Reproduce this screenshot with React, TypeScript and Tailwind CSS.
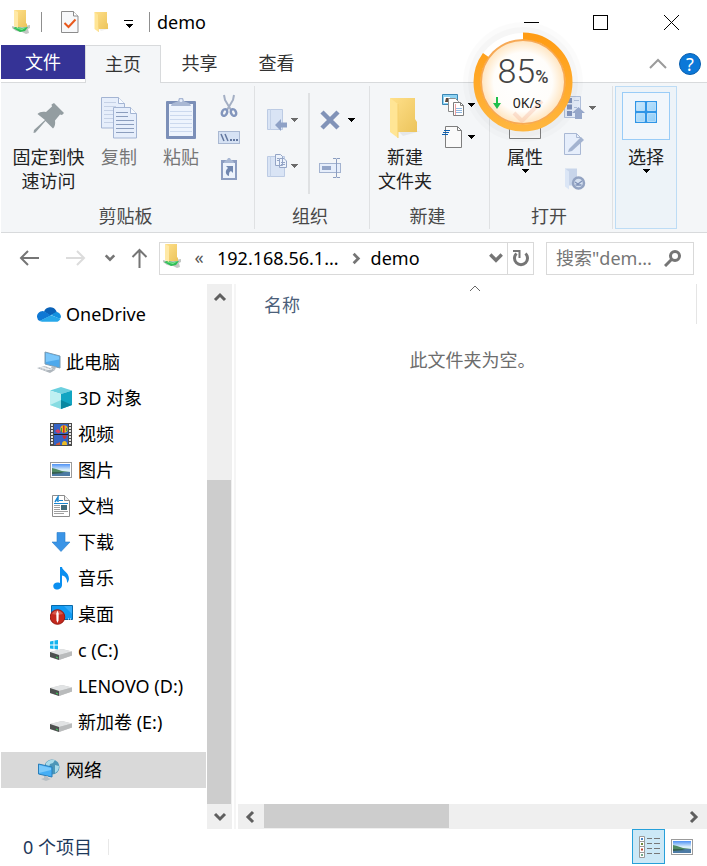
import type { ReactNode } from "react";

type IconProps = { className?: string };

/* ---------- shared shapes ---------- */

function DropArrow({ dim = false }: { dim?: boolean }) {
  return (
    <svg width="8" height="4" viewBox="0 0 8 4" className="shrink-0" shapeRendering="crispEdges">
      <path d="M0 0h8L4 4z" fill={dim ? "#6b6b6b" : "#000"} />
    </svg>
  );
}

function SharedFolder({ className }: IconProps) {
  return (
    <svg width="20" height="24" viewBox="0 0 20 24" className={className}>
      <defs>
        <linearGradient id="sharedBack" x1="0" y1="0" x2="1" y2="1">
          <stop offset="0" stopColor="#ffe08a" />
          <stop offset="1" stopColor="#ecc45c" />
        </linearGradient>
      </defs>
      <path d="M1 16l4 1 8-1 6-1v3l-2 1 1 4-3 1-4-2-6-1-4-3z" fill="#c3c7c4" />
      <path d="M2 18l3-1 6 1 6-1-3 4-5 1z" fill="#2fbf55" />
      <path d="M4 18l7 .5 4-1-4 2.500z" fill="#86e69b" />
      <path d="M3 0h12v13l1 1v3H7z" fill="url(#sharedBack)" />
      <path d="M3 0l4 2v16l-4-2z" fill="#ffe9a6" />
    </svg>
  );
}

function Folder({ big = false }: { big?: boolean }) {
  return (
    <svg width={big ? 32 : 16} height={big ? 42 : 22} viewBox="0 0 32 42">
      <defs>
        <linearGradient id="folderBack" x1="0" y1="0" x2="1" y2="1">
          <stop offset="0" stopColor="#ffe08a" />
          <stop offset="1" stopColor="#ecc45c" />
        </linearGradient>
      </defs>
      <path d="M10 35l22-1-18 5z" fill="#000" opacity=".06" />
      <path d="M1 1h25v21l2 3v10H9z" fill="url(#folderBack)" />
      <path d="M1 1l8 6v34l-8-6z" fill="#ffe595" />
      <path d="M9 7v34" stroke="#f5cf6c" fill="none" />
    </svg>
  );
}

function CheckDoc() {
  return (
    <svg width="18" height="22" viewBox="0 0 18 22">
      <path d="M1 .5h11.500l4.500 4.500v16.500H.5V.5z" fill="#f7f8fa" stroke="#8c8c8c" />
      <path d="M12.500.5v4.500H17" fill="#fff" stroke="#8c8c8c" />
      <path d="M3.500 12l4 4 7-7.500" fill="none" stroke="#e8581c" strokeWidth="2" />
    </svg>
  );
}

function PhotoIcon() {
  return (
    <svg width="22" height="16" viewBox="0 0 22 16">
      <defs>
        <linearGradient id="sky" x1="0" y1="0" x2="0" y2="1">
          <stop offset="0" stopColor="#4f92f5" />
          <stop offset=".5" stopColor="#dff1fa" />
          <stop offset="1" stopColor="#a9cfe6" />
        </linearGradient>
      </defs>
      <rect x=".5" y=".5" width="21" height="15" fill="#fff" stroke="#9b9b9b" />
      <rect x="2" y="2" width="18" height="12" fill="url(#sky)" />
      <path d="M2 6l4 1 6 2 8 1v1H2z" fill="#4f8a63" />
      <path d="M2 10h18v4H2z" fill="#4d7ba5" />
      <path d="M2 10l9 0 3 1-12 1z" fill="#35604f" />
    </svg>
  );
}

function Chevron({ dir, size = 14, color = "#5f5f5f", w = 3 }: { dir: "up" | "down" | "left" | "right"; size?: number; color?: string; w?: number }) {
  const d = {
    up: "M2 10l5-5 5 5",
    down: "M2 4l5 5 5-5",
    left: "M9 2L4 7l5 5",
    right: "M5 2l5 5-5 5",
  }[dir];
  return (
    <svg width={size} height={size} viewBox="0 0 14 14" fill="none" stroke={color} strokeWidth={w}>
      <path d={d} />
    </svg>
  );
}

/* ---------- ribbon icons ---------- */

function PinIcon() {
  return (
    <svg width="32" height="32" viewBox="0 0 32 32" fill="#939da1">
      <path d="M21 1l10 10-2 2-2-.5-5 6c.5 3.500 0 6-2 8L12.500 19 2.500 30.500.5 31l.5-3L12 18 4.500 12c2-2 5-2.800 8.500-2l6-5.500-.5-2z" />
    </svg>
  );
}

function Sheet({ x, y, dark = false }: { x: number; y: number; dark?: boolean }) {
  return (
    <g transform={`translate(${x} ${y})`}>
      <path d="M.5.5h17l6 6v24.500H.5z" fill="#e6eefb" stroke="#a3b4d3" />
      <path d="M17.500.5v6h6" fill="#f8fbff" stroke="#a3b4d3" />
      <path
        d="M3 5.500h12M3 9.500h12M3 13.500h18M3 17.500h18M3 21.500h18M3 25.500h18"
        stroke={dark ? "#8b9dbd" : "#c5d1e6"}
      />
    </g>
  );
}

function CopyIcon() {
  return (
    <svg width="36" height="42" viewBox="0 0 36 42">
      <Sheet x={0} y={0} />
      <Sheet x={12} y={10} dark />
    </svg>
  );
}

function PasteIcon() {
  return (
    <svg width="30" height="42" viewBox="0 0 30 42">
      <rect x="0" y="4" width="30" height="38" rx="1" fill="#7b8fb8" />
      <rect x="3" y="7" width="24" height="32" fill="#eef4fd" />
      <path d="M4 14.500h22M4 18.500h22M4 22.500h22M4 26.500h22M4 30.500h22M4 34.500h22" stroke="#ccd9ee" />
      <path d="M5 9c1-4 4-3 7-5l1-3h4l1 3c3 2 6 1 7 5z" fill="#a9b8d4" />
      <circle cx="15" cy="3.500" r="1.500" fill="#e6eefb" />
    </svg>
  );
}

function CutIcon() {
  return (
    <svg width="18" height="24" viewBox="0 0 18 24" fill="none">
      <path d="M4 1l1 5 6 10M14 1l-1 5-6 10" stroke="#a4afc4" strokeWidth="2" />
      <ellipse cx="4.500" cy="18.500" rx="2.500" ry="3.500" stroke="#8396bd" strokeWidth="2.500" transform="rotate(25 4.500 18.500)" />
      <ellipse cx="13.500" cy="18.500" rx="2.500" ry="3.500" stroke="#8396bd" strokeWidth="2.500" transform="rotate(-25 13.500 18.500)" />
    </svg>
  );
}

function CopyPathIcon() {
  return (
    <svg width="22" height="13" viewBox="0 0 22 13">
      <rect x=".5" y=".5" width="21" height="12" fill="#d6e2f4" stroke="#a9b8d2" />
      <path d="M3 3l3 7M7 3l3 7" stroke="#62779f" strokeWidth="1.500" />
      <path d="M12 8h2v2h-2zM15 8h2v2h-2zM18 8h2v2h-2z" fill="#62779f" />
    </svg>
  );
}

function PasteShortcutIcon() {
  return (
    <svg width="16" height="23" viewBox="0 0 16 23">
      <rect y="3" width="16" height="20" fill="#8c9dc1" />
      <rect x="2" y="6" width="12" height="15" fill="#edf3fc" />
      <path d="M3 6c0-3 3-2 4-5h2c1 3 4 2 4 5z" fill="#a9b8d4" />
      <path d="M5 9h7v7l-2-2c-2 1-2 2-2 5-4-1-4-6-1-8z" fill="#7187b0" />
    </svg>
  );
}

function MoveToIcon() {
  return (
    <svg width="20" height="24" viewBox="0 0 20 24">
      <path d="M.5 1.500h15v20H.5z" fill="#d9e4f5" stroke="#bccbe4" />
      <path d="M3.500 1.500v20" stroke="#c4d2e8" />
      <path d="M8 17l6-6v3.500h6v5h-6V23z" fill="#8ea1c6" />
    </svg>
  );
}

function CopyToIcon() {
  return (
    <svg width="20" height="24" viewBox="0 0 20 24">
      <path d="M.5 2.500h17v20H.5z" fill="#d9e4f5" stroke="#bccbe4" />
      <path d="M3.500 2.500v20" stroke="#c4d2e8" />
      <path d="M8.500.5h5l2 2v9h-7zM12.500 4.500h4.500l2.500 2.500v6.500h-7z" fill="#edf3fc" stroke="#94a5c6" />
      <path d="M14 8.500h4M14 10.500h4M10 4.500h2M10 6.500h2" stroke="#94a5c6" />
    </svg>
  );
}

function DeleteIcon() {
  return (
    <svg width="22" height="20" viewBox="0 0 22 20">
      <path d="M3 2l16 16M19 2L3 18" stroke="#8193b8" strokeWidth="4.500" />
    </svg>
  );
}

function RenameIcon() {
  return (
    <svg width="22" height="20" viewBox="0 0 22 20" fill="none">
      <rect x=".5" y="5.500" width="21" height="9" fill="#e6eefb" stroke="#a3b3d0" />
      <rect x="3" y="8" width="9" height="4" fill="#93a5c8" />
      <path d="M14 .5h3l.500 1 .5-1h3M14 19.500h3l.500-1 .5 1h3M17.500 1v18" stroke="#8b9dc0" />
    </svg>
  );
}

function NewItemIcon() {
  return (
    <svg width="22" height="22" viewBox="0 0 22 22">
      <path d="M.5.5h15v10H.5z" fill="#8ed3f3" stroke="#3b86b4" />
      <path d="M2 3h6v6H2z" fill="#fff" />
      <path d="M4 4h3v4H3z" fill="#5c493c" />
      <path d="M6.500 4.500h7l3 3v10h-10z" fill="#fff" stroke="#8a8a8a" />
      <path d="M11.500 8.500h7l3 3v10h-10z" fill="#fff" stroke="#7e7e7e" />
      <path d="M18.500 8.500v3h3" fill="none" stroke="#7e7e7e" />
      <path d="M14 14.500h6M14 16.500h6M14 18.500h6" stroke="#8fb7e0" />
      <path d="M13.500 10v11" stroke="#f0a0a0" />
    </svg>
  );
}

function EasyAccessIcon() {
  return (
    <svg width="22" height="22" viewBox="0 0 22 22">
      <path d="M3.500.5h12l4 4v17h-16z" fill="#fafafa" stroke="#7e7e7e" />
      <path d="M15.500.5v4h4" fill="none" stroke="#7e7e7e" />
      <path d="M2 4.500h6M1 6.500h6M0 8.500h6" stroke="#0d5fae" />
    </svg>
  );
}

function PropertiesIcon() {
  return (
    <svg width="32" height="42" viewBox="0 0 32 42" fill="none">
      <path d="M.5.500h31v41H.5z" fill="#f7f7f7" stroke="#808080" />
    </svg>
  );
}

function OpenWithIcon() {
  return (
    <svg width="21" height="24" viewBox="0 0 21 24">
      <path d="M.5.500h16v21H.5z" fill="#e3ebf8" stroke="#b0bfda" />
      <path d="M3 2h5v5H3zM3 8.500h5v5H3zM3 15h5v5H3z" fill="#8294bc" />
      <path d="M10 4.500h5M10 11.500h3" stroke="#b0bfda" />
      <path d="M14.500 11l6.500 6h-3v6h-7v-6H8z" fill="#96a7ca" />
    </svg>
  );
}

function EditIcon() {
  return (
    <svg width="22" height="22" viewBox="0 0 22 22">
      <path d="M.5.500h12l4 4v17H.5z" fill="#e6eefb" stroke="#a9b8d4" />
      <path d="M12.500.5v4h4" fill="none" stroke="#a9b8d4" />
      <path d="M4 19l1-3L17 4l3 3L8 18z" fill="#a3b3d0" />
    </svg>
  );
}

function HistoryIcon() {
  return (
    <svg width="22" height="22" viewBox="0 0 22 22">
      <path d="M1 .5h12v17H5z" fill="#c8d5ea" />
      <path d="M1 .5l4 3v18l-4-3z" fill="#dbe6f6" />
      <circle cx="14.500" cy="15" r="5.500" fill="#d5e0f0" stroke="#93a3c2" strokeWidth="2.500" />
      <path d="M11 14l3 2 4-3M11.500 17h6" fill="none" stroke="#8193b8" strokeWidth="1.300" />
    </svg>
  );
}

function SelectIcon() {
  return (
    <svg width="22" height="22" viewBox="0 0 22 22">
      <defs>
        <linearGradient id="pane" x1="0" y1="0" x2="1" y2="1">
          <stop offset="0" stopColor="#c9e8fd" />
          <stop offset="1" stopColor="#8fcdf8" />
        </linearGradient>
      </defs>
      <path d="M0 0h22v22H0z" fill="#2f95e6" />
      <path d="M1.500 1.500h8v8h-8zM12.500 1.500h8v8h-8zM1.500 12.500h8v8h-8zM12.500 12.500h8v8h-8z" fill="url(#pane)" stroke="#eaf6ff" strokeWidth=".6" />
    </svg>
  );
}

/* ---------- navigation tree icons ---------- */

function OneDriveIcon() {
  return (
    <svg width="24" height="16" viewBox="0 0 24 16">
      <path d="M7 5.500A6.800 6.800 0 0119 4.500l1 2-7 3z" fill="#0a62b8" />
      <path d="M0 11a5.500 5.500 0 017.500-5.500L14 9.500 3 15A4.500 4.500 0 010 11z" fill="#0f78d4" />
      <path d="M14 9l5-3a5 5 0 015 5c-.5 1-1 1.500-2 1.500z" fill="#1490df" />
      <path d="M2.500 15L14 9.200l9.500 3.500c-.8 2-2.500 3.100-4.500 3.100H5z" fill="#28a8ea" />
    </svg>
  );
}

function ComputerIcon() {
  return (
    <svg width="24" height="22" viewBox="0 0 24 22">
      <path d="M8 1l15 4v12L8 13z" fill="#4ea9ec" stroke="#7d9cb2" />
      <path d="M9 2l13 3.500v3L9 11z" fill="#7cc7fa" />
      <path d="M15 15l4 1-1 3-4-2z" fill="#b5bcc2" />
      <path d="M0 17l8-2 10 4-5 3z" fill="#aeb6bd" />
      <path d="M3 17l6-1M5 18l7-1M8 19l7-1" stroke="#f0f2f4" />
    </svg>
  );
}

function CubeIcon() {
  return (
    <svg width="22" height="22" viewBox="0 0 22 22">
      <path d="M11 0l11 3.500L11 7 0 3.500z" fill="#6cd0df" />
      <path d="M0 3.500L11 7v15L0 18z" fill="#bff0f2" />
      <path d="M22 3.500L11 7v15l11-4z" fill="#12a5c2" />
      <path d="M0 18l11-5 0 9z" fill="#86dce2" />
      <path d="M22 18l-11-5v9z" fill="#0987a0" />
    </svg>
  );
}

function VideoIcon() {
  return (
    <svg width="22" height="23" viewBox="0 0 22 23">
      <path d="M0 0h22v23H0z" fill="#4a4a4a" />
      <path d="M4 1h14v10H4zM4 12h14v10H4z" fill="#3563c4" />
      <path d="M1 1h2v2H1zM1 4h2v2H1zM1 7h2v2H1zM1 10h2v2H1zM1 13h2v2H1zM1 16h2v2H1zM1 19h2v2H1zM19 1h2v2h-2zM19 4h2v2h-2zM19 7h2v2h-2zM19 10h2v2h-2zM19 13h2v2h-2zM19 16h2v2h-2zM19 19h2v2h-2z" fill="#e4e4e4" />
      <circle cx="14" cy="6" r="3.800" fill="#e8b120" />
      <path d="M13 2.500h1.500V10H13z" fill="#cc2d2d" />
      <path d="M11 5h1v4h-1zM16 5h1v3h-1z" fill="#3a9a45" />
      <path d="M5 8l3-2 3 3-3 1.500z" fill="#d33f63" />
      <path d="M12 12.500h5l-2 3.500h-1z" fill="#d12c2c" />
      <path d="M12 21c0-4 5-4 5 0v1h-5z" fill="#eabb28" />
      <path d="M6 21l4-2v3H6z" fill="#cf5637" />
      <path d="M4 11.500h14" stroke="#1e1e1e" />
    </svg>
  );
}

function DocumentIcon() {
  return (
    <svg width="18" height="22" viewBox="0 0 18 22">
      <path d="M.5.500h12l5 5v16H.5z" fill="#fff" stroke="#8c8c8c" />
      <path d="M12.500.5v5h5" fill="#f0f0f0" stroke="#8c8c8c" />
      <path d="M3 7l3-5v5M4 5h2" fill="none" stroke="#1a86d0" strokeWidth="1.500" />
      <path d="M7 5.500h4M2 8.500h14" stroke="#1a86d0" />
      <path d="M2 10.500h6M2 12.500h6M2 14.500h6M2 16.500h14M2 18.500h10" stroke="#a0a0a0" />
      <path d="M9 10h6v5H9z" fill="#416c7c" />
    </svg>
  );
}

function DownloadIcon() {
  return (
    <svg width="20" height="20" viewBox="0 0 20 20">
      <path d="M6 .5h8v9.500h5L10 19.500 1 10h5z" fill="#3a94e6" stroke="#2a7ecb" strokeWidth=".6" />
    </svg>
  );
}

function MusicIcon() {
  return (
    <svg width="16" height="23" viewBox="0 0 16 23" fill="#0b8ff0">
      <path d="M7 0h2c.5 4 7 5 7 12-.3 2-1 3-2 4 .5-5-2.500-7-5-7.500V18c0 3-3 5-6 4.500S-.5 18 1.500 16.500C3 15.300 5 15.500 7 16z" />
    </svg>
  );
}

function DesktopIcon() {
  return (
    <svg width="23" height="21" viewBox="0 0 23 21">
      <path d="M1.500 1.500h21v14h-21z" fill="#109af2" stroke="#0868a9" />
      <path d="M14 2h8v8z" fill="#4bb9ff" opacity=".6" />
      <path d="M18 15h1M20 15h1" stroke="#fff" />
      <circle cx="7.500" cy="13" r="7.300" fill="#c4281d" stroke="#941a13" />
      <path d="M2 10a6 6 0 0111 0c-3 1-8 1-11 0z" fill="#e67a6e" opacity=".6" />
      <path d="M7.500 6.500l1.200 3-.2 7-1 2.500-1-2.500-.2-7z" fill="#fff" />
    </svg>
  );
}

function DriveIcon({ system = false }: { system?: boolean }) {
  return (
    <svg width="23" height="20" viewBox="0 0 23 20">
      <path d="M0 12l12-3 10 2.500v4L9 20l-9-3z" fill="#c8c8c8" />
      <path d="M0 12l12-3 10 2.500L9 15z" fill="#e1e3e4" />
      <path d="M0 12l9 3v5l-9-3z" fill="#4e5150" />
      <path d="M6 16.500l2 .7v1.300l-2-.7z" fill="#3fbf5a" />
      <path d="M22 11.500v4L9 20v-5z" fill="#b9bbbc" />
      {system && <path d="M0 1.500l3.500-.7v3.700H0zM4.500.600L8 0v4.500H4.500zM0 5.500h3.500v3.500L0 8.500zM4.500 5.500H8v4l-3.500-.6z" fill="#13b4ee" />}
    </svg>
  );
}

function NetworkIcon() {
  return (
    <svg width="22" height="22" viewBox="0 0 22 22">
      <circle cx="14" cy="8" r="7.500" fill="#4c96b8" />
      <path d="M8 4c2-3 6-4 9-3l-2 3-3 1-1 3-3-1zM17 6l4 1c0 4-2 6-4 7z" fill="#a9dbea" />
      <path d="M.5 5l13.500 3v10L.5 15z" fill="#45aef5" stroke="#297eba" />
      <path d="M1 6l12 3v2L1 14z" fill="#79c9fb" />
      <path d="M6 17h4v2l3 1-5 2-5-2 3-1z" fill="#b6bec4" />
    </svg>
  );
}

/* ---------- ribbon building blocks ---------- */

function RibbonGroup({ label, children, className }: { label: string; children: ReactNode; className: string }) {
  return (
    <section aria-label={label} className={`flex shrink-0 flex-col border-r border-[#dfe1e3] ${className}`}>
      <div className="flex h-[118px]">{children}</div>
      <div className="pr-1 text-center leading-6 text-[#484848]">{label}</div>
    </section>
  );
}

function BigButton({ icon, lines, className = "", muted = false, arrow = false }: { icon: ReactNode; lines: string[]; className?: string; muted?: boolean; arrow?: boolean }) {
  return (
    <button type="button" className={`flex shrink-0 flex-col items-center leading-6 ${muted ? "text-[#777777]" : "text-[#222222]"} ${className}`}>
      <span className="flex h-[59px] items-center pt-1">{icon}</span>
      {lines.map((line) => (
        <span key={line} className="block whitespace-nowrap">{line}</span>
      ))}
      {arrow && <DropArrow />}
    </button>
  );
}

function SmallButton({ icon, label, arrow }: { icon: ReactNode; label: string; arrow?: "dim" | "dark" }) {
  return (
    <button type="button" aria-label={label} className="flex items-center gap-[3px]">
      {icon}
      {arrow && <DropArrow dim={arrow === "dim"} />}
    </button>
  );
}

/* ---------- window sections ---------- */

function TitleBar() {
  return (
    <header className="flex h-11 items-center pl-[10px]">
      <SharedFolder />
      <span className="ml-[10px] h-5 w-px bg-[#8f8f8f]" />
      <div className="ml-[19px] flex items-center">
        <button type="button" aria-label="属性"><CheckDoc /></button>
        <button type="button" aria-label="新建文件夹" className="ml-[15px]"><Folder /></button>
        <button type="button" aria-label="自定义快速访问工具栏" className="ml-[14px] flex flex-col items-center gap-[3px] pt-1">
          <span className="h-px w-[9px] bg-black" />
          <DropArrow />
        </button>
      </div>
      <span className="ml-4 h-5 w-px bg-[#8f8f8f]" />
      <h1 className="ml-[7px] flex-1 text-black">demo</h1>
      <div className="flex items-center pr-7">
        <button type="button" aria-label="最小化" className="h-[15px] w-[15px]">
          <span className="block h-px w-full bg-black" />
        </button>
        <button type="button" aria-label="最大化" className="ml-[54px] h-[15px] w-[15px] border border-black" />
        <button type="button" aria-label="关闭" className="ml-14">
          <svg width="15" height="15" viewBox="0 0 15 15" stroke="#000"><path d="M0 0l15 15M15 0L0 15" /></svg>
        </button>
      </div>
    </header>
  );
}

function Tabs() {
  return (
    <nav className="mt-px flex h-[38px] border-b border-[#d8dadc] text-[#333333]">
      <button type="button" className="mb-[3px] w-[84px] bg-[#353396] text-white">文件</button>
      <button type="button" className="-mb-px h-[38px] w-[76px] border-x border-t border-[#d8dadc] bg-[#f4f6f8] pb-[2px]">主页</button>
      <button type="button" className="w-[77px] pb-[2px]">共享</button>
      <button type="button" className="w-[77px] pb-[2px]">查看</button>
      <div className="ml-auto flex items-center gap-3 pr-[6px]">
        <button type="button" aria-label="最小化功能区">
          <svg width="18" height="12" viewBox="0 0 18 12" fill="none" stroke="#9b9b9b" strokeWidth="2"><path d="M1 10l8-8 8 8" /></svg>
        </button>
        <button type="button" aria-label="帮助" className="flex h-[22px] w-[22px] items-center justify-center rounded-full border border-[#0a5fae] bg-[#0b78d8] text-lg leading-none text-white">?</button>
      </div>
    </nav>
  );
}

function Ribbon() {
  return (
    <div className="flex h-[150px] border-b border-[#d8dadc] bg-[#f4f6f8] py-[3px]">
      <RibbonGroup label="剪贴板" className="w-[254px]">
        <BigButton icon={<PinIcon />} lines={["固定到快", "速访问"]} className="ml-2 w-[79px]" />
        <BigButton icon={<CopyIcon />} lines={["复制"]} className="w-[62px]" muted />
        <BigButton icon={<PasteIcon />} lines={["粘贴"]} className="w-[62px]" muted />
        <div className="ml-[3px] flex w-7 flex-col items-center gap-[13px] pt-2">
          <SmallButton icon={<CutIcon />} label="剪切" />
          <SmallButton icon={<CopyPathIcon />} label="复制路径" />
          <SmallButton icon={<PasteShortcutIcon />} label="粘贴快捷方式" />
        </div>
      </RibbonGroup>
      <RibbonGroup label="组织" className="w-[115px]">
        <div className="ml-3 flex flex-col gap-[22px] pt-[22px]">
          <SmallButton icon={<MoveToIcon />} label="移动到" arrow="dim" />
          <SmallButton icon={<CopyToIcon />} label="复制到" arrow="dim" />
        </div>
        <span className="mt-[7px] ml-[10px] h-[101px] w-[2px] bg-[#dfe1e3]" />
        <div className="ml-[9px] flex flex-col items-start gap-7 pt-6">
          <span className="flex items-center gap-[6px]"><SmallButton icon={<DeleteIcon />} label="删除" /><DropArrow /></span>
          <SmallButton icon={<RenameIcon />} label="重命名" />
        </div>
      </RibbonGroup>
      <RibbonGroup label="新建" className="w-[120px]">
        <BigButton icon={<Folder big />} lines={["新建", "文件夹"]} className="w-[70px]" />
        <div className="ml-[2px] flex flex-col gap-[10px] pt-2">
          <SmallButton icon={<NewItemIcon />} label="新建项目" arrow="dark" />
          <SmallButton icon={<EasyAccessIcon />} label="轻松访问" arrow="dark" />
        </div>
      </RibbonGroup>
      <RibbonGroup label="打开" className="w-[123px]">
        <BigButton icon={<PropertiesIcon />} lines={["属性"]} className="w-[70px]" arrow />
        <div className="ml-1 flex flex-col gap-[13px] pt-[10px]">
          <SmallButton icon={<OpenWithIcon />} label="打开方式" arrow="dim" />
          <SmallButton icon={<EditIcon />} label="编辑" />
          <SmallButton icon={<HistoryIcon />} label="历史记录" />
        </div>
      </RibbonGroup>
      <button type="button" className="ml-[2px] flex w-[62px] shrink-0 flex-col items-center border border-[#bddcf5] bg-[#edf3f8] pt-[5px] leading-6 text-[#222222]">
        <span className="mb-[5px] flex h-12 w-12 justify-center border border-[#99ccf7] bg-[#f1f6fb] pt-2"><SelectIcon /></span>
        <span>选择</span>
        <DropArrow />
      </button>
    </div>
  );
}

function AddressRow() {
  return (
    <div className="flex h-[50px] items-center pr-[13px] pl-[18px]">
      <button type="button" aria-label="后退">
        <svg width="21" height="16" viewBox="0 0 21 16" fill="none" stroke="#757575" strokeWidth="2"><path d="M20 8H2M9 1L2 8l7 7" /></svg>
      </button>
      <button type="button" aria-label="前进" className="ml-[25px]">
        <svg width="21" height="16" viewBox="0 0 21 16" fill="none" stroke="#dcdcdc" strokeWidth="2"><path d="M1 8h18M12 1l7 7-7 7" /></svg>
      </button>
      <button type="button" aria-label="最近的位置" className="ml-[18px]"><Chevron dir="down" size={12} color="#757575" /></button>
      <button type="button" aria-label="上移" className="ml-[15px]">
        <svg width="17" height="20" viewBox="0 0 17 20" fill="none" stroke="#757575" strokeWidth="2"><path d="M8.500 20V2M1.500 9l7-7 7 7" /></svg>
      </button>
      <div className="ml-[11px] flex h-[33px] min-w-0 flex-1 items-center border border-[#d9d9d9] text-black">
        <SharedFolder className="mb-1 ml-[2px] shrink-0" />
        <button type="button" className="ml-[10px] w-[14px] shrink-0 pb-[2px] text-[#555555]">«</button>
        <button type="button" className="ml-[11px] whitespace-nowrap">192.168.56.1...</button>
        <span className="ml-[10px]"><Chevron dir="right" size={13} color="#757575" /></span>
        <button type="button" className="ml-[9px]">demo</button>
        <button type="button" aria-label="以前的位置" className="mr-[3px] ml-auto"><Chevron dir="down" size={16} color="#757575" /></button>
        <button type="button" aria-label="刷新" className="flex h-full w-[26px] shrink-0 items-center justify-center border-l border-[#d9d9d9]">
          <svg width="18" height="18" viewBox="0 0 18 18" fill="none" stroke="#757575" strokeWidth="3"><path d="M4.500 4.500a6.500 6.500 0 109 0" /><path d="M1 2h6.500v7" strokeWidth="2" /></svg>
        </button>
      </div>
      <label className="ml-3 flex h-[33px] w-[148px] shrink-0 items-center border border-[#d9d9d9] pr-3 pl-[9px]">
        <input type="text" aria-label="搜索" placeholder={'搜索"dem...'} className="w-0 min-w-0 flex-1 bg-transparent outline-none placeholder:text-[#767676]" />
        <svg width="17" height="17" viewBox="0 0 17 17" fill="none" stroke="#757575"><circle cx="11" cy="6" r="4.500" strokeWidth="3" /><path d="M8 9l-7 7" strokeWidth="3" /></svg>
      </label>
    </div>
  );
}

const places: { label: string; icon: ReactNode }[] = [
  { label: "3D 对象", icon: <CubeIcon /> },
  { label: "视频", icon: <VideoIcon /> },
  { label: "图片", icon: <PhotoIcon /> },
  { label: "文档", icon: <DocumentIcon /> },
  { label: "下载", icon: <DownloadIcon /> },
  { label: "音乐", icon: <MusicIcon /> },
  { label: "桌面", icon: <DesktopIcon /> },
  { label: "c (C:)", icon: <DriveIcon system /> },
  { label: "LENOVO (D:)", icon: <DriveIcon /> },
  { label: "新加卷 (E:)", icon: <DriveIcon /> },
];

function TreeItem({ icon, label, nested = false, selected = false }: { icon: ReactNode; label: string; nested?: boolean; selected?: boolean }) {
  return (
    <a href="#" className={`flex h-9 items-center gap-[5px] text-black ${nested ? "pl-12" : "pl-9"} ${selected ? "bg-[#d9d9d9]" : ""}`}>
      <span className="flex w-6 shrink-0 justify-center">{icon}</span>
      <span className="whitespace-nowrap">{label}</span>
    </a>
  );
}

function Sidebar() {
  return (
    <aside className="flex w-[235px] shrink-0 border-r-2 border-[#f5f5f5]">
      <nav className="flex-1 pt-3">
        <TreeItem icon={<OneDriveIcon />} label="OneDrive" />
        <div className="my-3">
          <TreeItem icon={<ComputerIcon />} label="此电脑" />
          {places.map((place) => (
            <TreeItem key={place.label} icon={place.icon} label={place.label} nested />
          ))}
        </div>
        <TreeItem icon={<NetworkIcon />} label="网络" selected />
      </nav>
      <div className="mr-[2px] ml-px flex w-[25px] flex-col bg-[#efefef]">
        <button type="button" aria-label="向上滚动" className="flex h-[25px] items-center justify-center"><Chevron dir="up" /></button>
        <div className="flex flex-1 flex-col pr-px">
          <div className="flex-[171]" />
          <div className="flex-[324] bg-[#cdcdcd]" />
        </div>
        <button type="button" aria-label="向下滚动" className="flex h-[25px] items-center justify-center"><Chevron dir="down" /></button>
      </div>
    </aside>
  );
}

function FileList() {
  return (
    <main className="ml-[2px] flex min-w-0 flex-1 flex-col">
      <div className="mr-[10px] flex h-10 flex-col border-r border-[#e5e5e5] pl-4">
        <svg width="12" height="8" viewBox="0 0 12 8" fill="none" stroke="#666" className="mx-auto shrink-0"><path d="M1 7l5-5 5 5" /></svg>
        <button type="button" className="pl-[10px] text-left leading-[26px] text-[#4c607a]">名称</button>
      </div>
      <p className="mt-6 text-center leading-6 text-[#6d6d6d]">此文件夹为空。</p>
      <div className="mt-auto flex h-[25px] bg-[#efefef]">
        <button type="button" aria-label="向左滚动" className="flex w-[26px] items-center justify-center"><Chevron dir="left" /></button>
        <div className="flex flex-1 pb-px">
          <div className="flex-[185] bg-[#cdcdcd]" />
          <div className="flex-[230]" />
        </div>
        <button type="button" aria-label="向右滚动" className="flex w-[28px] items-center justify-center"><Chevron dir="right" /></button>
      </div>
    </main>
  );
}

function StatusBar() {
  return (
    <footer className="flex h-[37px] items-start pr-[14px] pl-[22px]">
      <span className="leading-9 text-[#1e395b]">0 个项目</span>
      <span className="mt-[10px] ml-4 h-4 w-px bg-[#e8e8e8]" />
      <button type="button" aria-label="详细信息" className="ml-auto flex h-[35px] w-[33px] items-center justify-center border border-[#26a0da] bg-[#cce8f6]">
        <svg width="22" height="22" viewBox="0 0 22 22" fill="none">
          <path d="M1.500.500h5v21h-5zM1 5.500h6M1 10.500h6M1 16.500h6" fill="#fff" stroke="#9a9a9a" />
          <path d="M3 2h2v2H3z" fill="#4a86c8" />
          <path d="M3 7h2v2H3z" fill="#6d8a3a" />
          <path d="M3 12.500h2v2H3z" fill="#c0452b" />
          <path d="M3 18h2v2H3z" fill="#76a98a" />
          <path d="M9 2.500h5M16 2.500h6M9 7.500h5M16 7.500h6M9 12.500h5M16 12.500h6M9 17.500h5M16 17.500h6" stroke="#777" />
        </svg>
      </button>
      <button type="button" aria-label="大图标" className="ml-[6px] flex h-[35px] items-center"><PhotoIcon /></button>
    </footer>
  );
}

function SpeedGauge() {
  return (
    <div className="absolute top-[22px] left-[463px] h-[120px] w-[120px]">
      <svg width="120" height="120" viewBox="0 0 120 120" className="absolute inset-0">
        <defs>
          <linearGradient id="ring" x1="1" y1="0" x2="0" y2="0">
            <stop offset="0" stopColor="#ff9c14" />
            <stop offset="1" stopColor="#ffb63e" />
          </linearGradient>
          <radialGradient id="face">
            <stop offset="0" stopColor="#fff" stopOpacity=".97" />
            <stop offset=".7" stopColor="#fffdfa" stopOpacity=".96" />
            <stop offset="1" stopColor="#ffe3bb" stopOpacity=".95" />
          </radialGradient>
        </defs>
        <circle cx="60" cy="60" r="60" fill="#000" opacity=".015" />
        <circle cx="60" cy="60" r="55" fill="#000" opacity=".02" />
        <circle cx="60" cy="60" r="49" fill="#fff" />
        <circle cx="60" cy="60" r="42" fill="url(#face)" />
        <path d="M51 91l8 8 20-20" fill="none" stroke="#f3a98c" strokeWidth="4" opacity=".3" />
        <circle cx="60" cy="60" r="42" fill="none" stroke="#f7a955" strokeWidth="2" />
        <circle cx="60" cy="60" r="46" fill="none" stroke="url(#ring)" strokeWidth="7" pathLength="100" strokeDasharray="85 15" transform="rotate(-90 60 60)" />
      </svg>
      <div className="relative flex h-full flex-col items-center pt-[31px] text-[#444444]">
        <div className="flex items-baseline leading-9">
          <span className="font-[Roboto] text-[34px] font-light">85</span>
          <span className="font-[Roboto] text-lg font-medium">%</span>
        </div>
        <div className="flex items-center gap-3 pr-3 text-sm leading-6 text-[#222222]">
          <svg width="8" height="12" viewBox="0 0 8 12" fill="#1fbf4b"><path d="M3 0h2v6h3l-4 6-4-6h3z" /></svg>
          <span>0K/s</span>
        </div>
      </div>
    </div>
  );
}

export default function App() {
  return (
    <div className="relative flex min-h-screen flex-col overflow-hidden bg-white pl-px font-['Noto_Sans','Noto_Sans_CJK_SC',sans-serif] text-lg">
      <TitleBar />
      <Tabs />
      <Ribbon />
      <AddressRow />
      <div className="mt-px flex flex-1">
        <Sidebar />
        <FileList />
      </div>
      <StatusBar />
      <SpeedGauge />
    </div>
  );
}
